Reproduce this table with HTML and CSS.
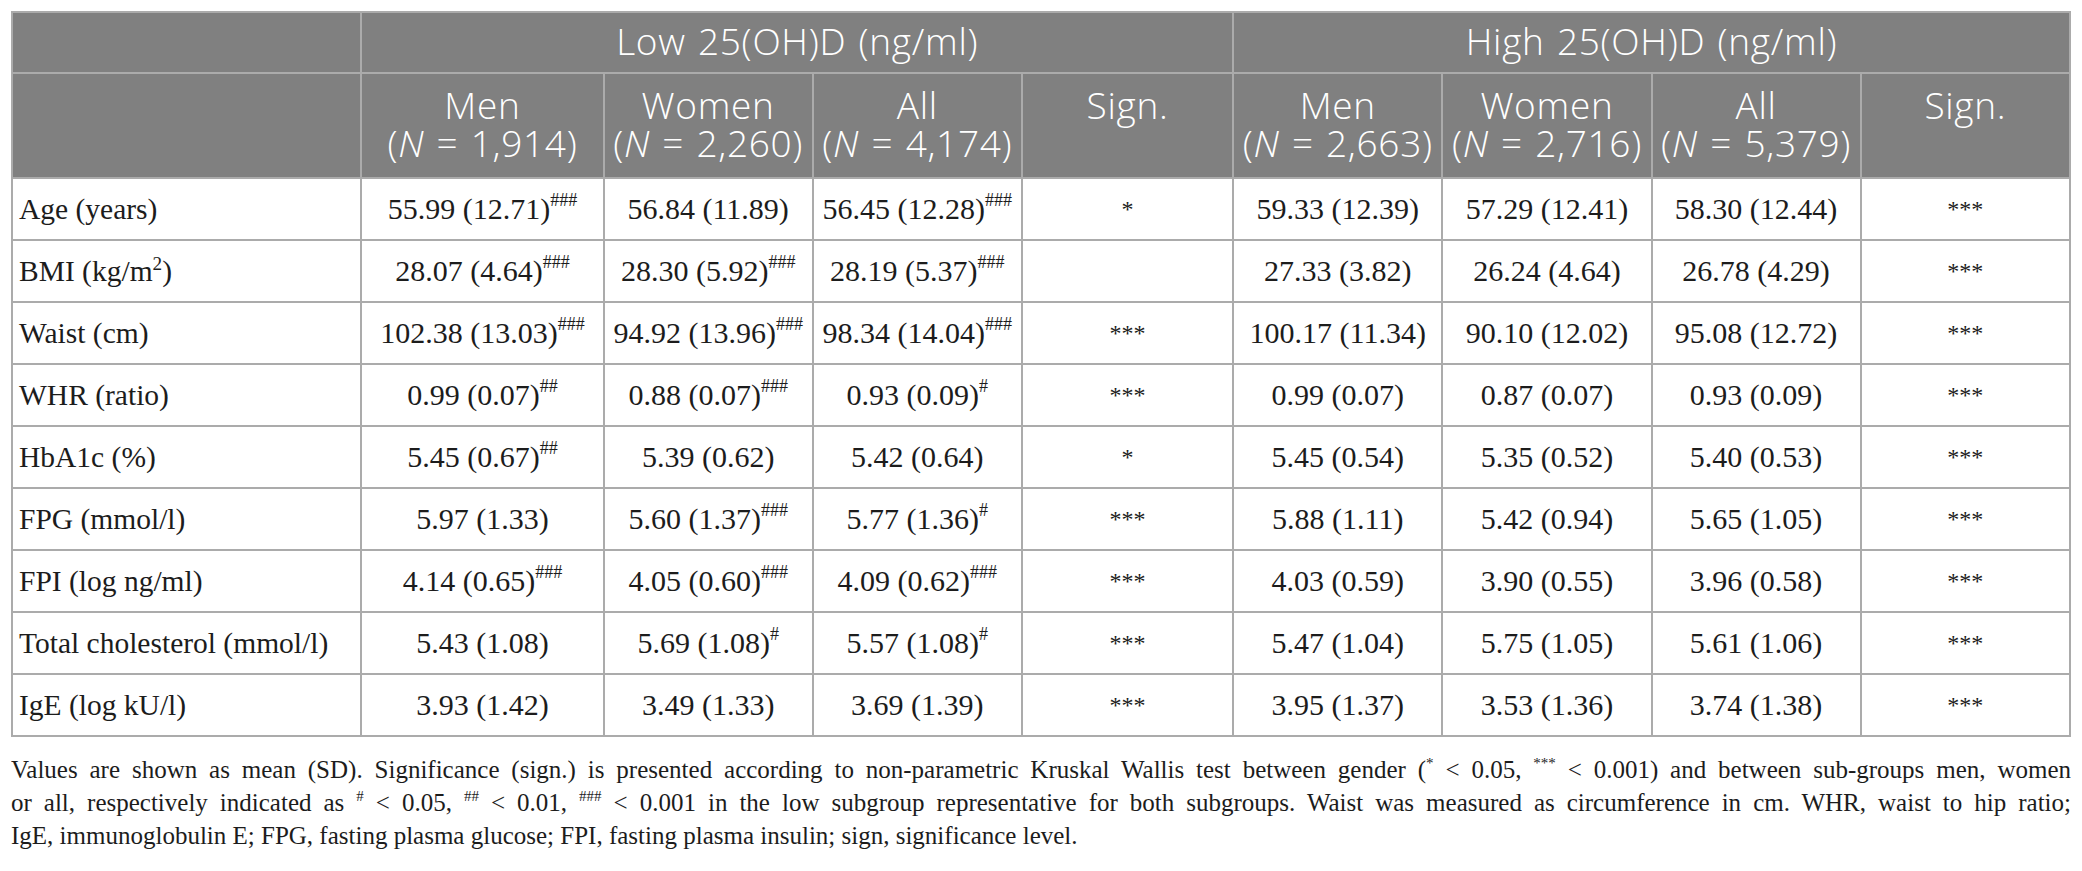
FILE: index.html
```html
<!DOCTYPE html>
<html lang="en">
<head>
  <meta charset="UTF-8">
  <meta name="viewport" content="width=device-width, initial-scale=1.0">
  <title>25(OH)D subgroups</title>
  <link rel="stylesheet" href="styles.css">
</head>
<body>
  <table class="data-table">
    <colgroup>
      <col class="col-label">
      <col class="col-men-low">
      <col class="col-std">
      <col class="col-std">
      <col class="col-sign">
      <col class="col-std">
      <col class="col-std">
      <col class="col-std">
      <col class="col-std">
    </colgroup>
    <thead>
      <tr class="group-row">
        <th></th>
        <th colspan="4">Low 25(OH)D (ng/ml)</th>
        <th colspan="4">High 25(OH)D (ng/ml)</th>
      </tr>
      <tr class="sub-row">
        <th></th>
        <th>Men<br>(<i>N</i> = 1,914)</th>
        <th>Women<br>(<i>N</i> = 2,260)</th>
        <th>All<br>(<i>N</i> = 4,174)</th>
        <th>Sign.</th>
        <th>Men<br>(<i>N</i> = 2,663)</th>
        <th>Women<br>(<i>N</i> = 2,716)</th>
        <th>All<br>(<i>N</i> = 5,379)</th>
        <th>Sign.</th>
      </tr>
    </thead>
    <tbody>
      <tr>
        <td class="label">Age (years)</td>
        <td>55.99 (12.71)<sup>###</sup></td>
        <td>56.84 (11.89)</td>
        <td>56.45 (12.28)<sup>###</sup></td>
        <td class="sign">*</td>
        <td>59.33 (12.39)</td>
        <td>57.29 (12.41)</td>
        <td>58.30 (12.44)</td>
        <td class="sign">***</td>
      </tr>
      <tr>
        <td class="label">BMI (kg/m<sup class="unit">2</sup>)</td>
        <td>28.07 (4.64)<sup>###</sup></td>
        <td>28.30 (5.92)<sup>###</sup></td>
        <td>28.19 (5.37)<sup>###</sup></td>
        <td class="sign"></td>
        <td>27.33 (3.82)</td>
        <td>26.24 (4.64)</td>
        <td>26.78 (4.29)</td>
        <td class="sign">***</td>
      </tr>
      <tr>
        <td class="label">Waist (cm)</td>
        <td>102.38 (13.03)<sup>###</sup></td>
        <td>94.92 (13.96)<sup>###</sup></td>
        <td>98.34 (14.04)<sup>###</sup></td>
        <td class="sign">***</td>
        <td>100.17 (11.34)</td>
        <td>90.10 (12.02)</td>
        <td>95.08 (12.72)</td>
        <td class="sign">***</td>
      </tr>
      <tr>
        <td class="label">WHR (ratio)</td>
        <td>0.99 (0.07)<sup>##</sup></td>
        <td>0.88 (0.07)<sup>###</sup></td>
        <td>0.93 (0.09)<sup>#</sup></td>
        <td class="sign">***</td>
        <td>0.99 (0.07)</td>
        <td>0.87 (0.07)</td>
        <td>0.93 (0.09)</td>
        <td class="sign">***</td>
      </tr>
      <tr>
        <td class="label">HbA1c (%)</td>
        <td>5.45 (0.67)<sup>##</sup></td>
        <td>5.39 (0.62)</td>
        <td>5.42 (0.64)</td>
        <td class="sign">*</td>
        <td>5.45 (0.54)</td>
        <td>5.35 (0.52)</td>
        <td>5.40 (0.53)</td>
        <td class="sign">***</td>
      </tr>
      <tr>
        <td class="label">FPG (mmol/l)</td>
        <td>5.97 (1.33)</td>
        <td>5.60 (1.37)<sup>###</sup></td>
        <td>5.77 (1.36)<sup>#</sup></td>
        <td class="sign">***</td>
        <td>5.88 (1.11)</td>
        <td>5.42 (0.94)</td>
        <td>5.65 (1.05)</td>
        <td class="sign">***</td>
      </tr>
      <tr>
        <td class="label">FPI (log ng/ml)</td>
        <td>4.14 (0.65)<sup>###</sup></td>
        <td>4.05 (0.60)<sup>###</sup></td>
        <td>4.09 (0.62)<sup>###</sup></td>
        <td class="sign">***</td>
        <td>4.03 (0.59)</td>
        <td>3.90 (0.55)</td>
        <td>3.96 (0.58)</td>
        <td class="sign">***</td>
      </tr>
      <tr>
        <td class="label">Total cholesterol (mmol/l)</td>
        <td>5.43 (1.08)</td>
        <td>5.69 (1.08)<sup>#</sup></td>
        <td>5.57 (1.08)<sup>#</sup></td>
        <td class="sign">***</td>
        <td>5.47 (1.04)</td>
        <td>5.75 (1.05)</td>
        <td>5.61 (1.06)</td>
        <td class="sign">***</td>
      </tr>
      <tr>
        <td class="label">IgE (log kU/l)</td>
        <td>3.93 (1.42)</td>
        <td>3.49 (1.33)</td>
        <td>3.69 (1.39)</td>
        <td class="sign">***</td>
        <td>3.95 (1.37)</td>
        <td>3.53 (1.36)</td>
        <td>3.74 (1.38)</td>
        <td class="sign">***</td>
      </tr>
    </tbody>
  </table>

  <!-- table footnote, broken where the journal layout breaks it -->
  <p class="table-note">
    <span class="note-line">Values are shown as mean (SD). Significance (sign.) is presented according to non-parametric Kruskal Wallis test between gender (<sup>*</sup> &lt; 0.05, <sup>***</sup> &lt; 0.001) and between sub-groups men, women</span>
    <span class="note-line">or all, respectively indicated as <sup>#</sup> &lt; 0.05, <sup>##</sup> &lt; 0.01, <sup>###</sup> &lt; 0.001 in the low subgroup representative for both subgroups. Waist was measured as circumference in cm. WHR, waist to hip ratio;</span>
    <span class="note-line last">IgE, immunoglobulin E; FPG, fasting plasma glucose; FPI, fasting plasma insulin; sign, significance level.</span>
  </p>
</body>
</html>
```

FILE: styles.css
```css
body {
  margin: 11px;
  font-family: "Liberation Serif", "Times New Roman", serif;
  color: #1c1c1c;
  background: #fff;
}
.data-table {
  width: 2060px;
  border-collapse: collapse;
  table-layout: fixed;
  border: 2px solid #ababab;
}
.col-label { width: 349px; }
.col-men-low { width: 242px; }
.col-std { width: 209px; }
.col-sign { width: 211px; }
.data-table th,
.data-table td {
  border: 2px solid #ababab;
}
.data-table thead th {
  background: #808080;
  color: #fff;
  font-family: "Open Sans", Lato, sans-serif;
  font-weight: 300;
  font-size: 37px;
  line-height: 38px;
  letter-spacing: 0.7px;
  word-spacing: 2px;
  text-align: center;
}
.group-row th {
  height: 56px;
  padding: 0 0 3px;
  vertical-align: middle;
}
.sub-row th {
  height: 91px;
  padding: 12px 0 0;
  vertical-align: top;
}
.data-table tbody td {
  height: 60px;
  padding: 0 6px;
  font-size: 30px;
  text-align: center;
  vertical-align: middle;
}
.data-table tbody td.label {
  font-size: 29.5px;
  text-align: left;
}
.data-table tbody td.sign {
  font-size: 24px;
}
sup {
  font-size: 0.6em;
  line-height: 0;
  vertical-align: 0.7em;
}
sup.unit {
  font-size: 0.65em;
  vertical-align: 0.6em;
}
.table-note {
  margin: 16px 0 0;
  font-size: 25px;
  line-height: 33px;
}
.note-line {
  display: block;
  text-align: justify;
  text-align-last: justify;
}
.note-line.last {
  text-align: left;
  text-align-last: left;
}
```
